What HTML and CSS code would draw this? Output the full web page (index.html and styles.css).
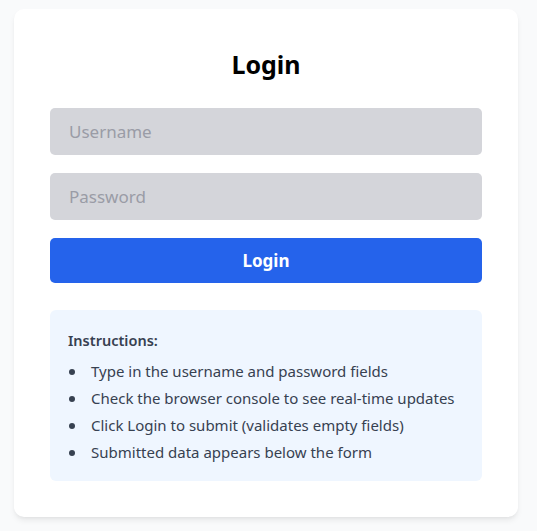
FILE: index.html
```html
<!DOCTYPE html>
<html lang="en">
<head>
<meta charset="utf-8">
<title>Login</title>
<link rel="stylesheet" href="styles.css">
</head>
<body>
<main class="card">
  <h1 class="title">Login</h1>
  <form class="form">
    <input class="field" type="text" placeholder="Username">
    <input class="field" type="password" placeholder="Password">
    <button class="btn" type="button">Login</button>
  </form>
  <section class="info">
    <h2 class="info-title">Instructions:</h2>
    <ul class="info-list">
      <li>Type in the username and password fields</li>
      <li>Check the browser console to see real-time updates</li>
      <li>Click Login to submit (validates empty fields)</li>
      <li>Submitted data appears below the form</li>
    </ul>
  </section>
</main>
</body>
</html>
```

FILE: styles.css
```css
* { box-sizing: border-box; }
html, body { margin: 0; }
body {
  background: #f9fafb;
  font-family: "Noto Sans", "Open Sans", sans-serif;
  padding: 9px 0 0 14px;
  height: 531px;
  overflow: hidden;
}
.card {
  width: 504px;
  background: #ffffff;
  border-radius: 10px;
  box-shadow: 0 4px 6px -1px rgba(0,0,0,0.08), 0 2px 4px -2px rgba(0,0,0,0.06);
  padding: 39px 36px 36px;
}
.title {
  margin: 0 0 28px;
  font-size: 25px;
  line-height: 32px;
  font-weight: 700;
  text-align: center;
  color: #000;
}
.form {
  display: flex;
  flex-direction: column;
  gap: 18px;
}
.field {
  height: 47px;
  border: none;
  border-radius: 5px;
  background: #d4d5da;
  padding: 0 19px;
  font-family: inherit;
  font-size: 17px;
  color: #111827;
  outline: none;
}
.field::placeholder { color: #9a9ca6; }
.btn {
  height: 45px;
  border: none;
  border-radius: 5px;
  background: #2563eb;
  color: #fff;
  font-family: inherit;
  font-size: 17px;
  font-weight: 700;
}
.info {
  margin-top: 27px;
  background: #eff6ff;
  border-radius: 6px;
  padding: 18px 18px 15px;
  color: #374151;
}
.info-title {
  margin: 0 0 6px;
  font-size: 14.5px;
  line-height: 24px;
  font-weight: 600;
}
.info-list {
  margin: 0;
  padding: 0;
  list-style: none;
  font-size: 15px;
  line-height: 27px;
}
.info-list li {
  position: relative;
  padding-left: 23px;
}
.info-list li::before {
  content: "";
  position: absolute;
  left: 1px;
  top: 11px;
  width: 6px;
  height: 6px;
  border-radius: 50%;
  background: #374151;
}
```
